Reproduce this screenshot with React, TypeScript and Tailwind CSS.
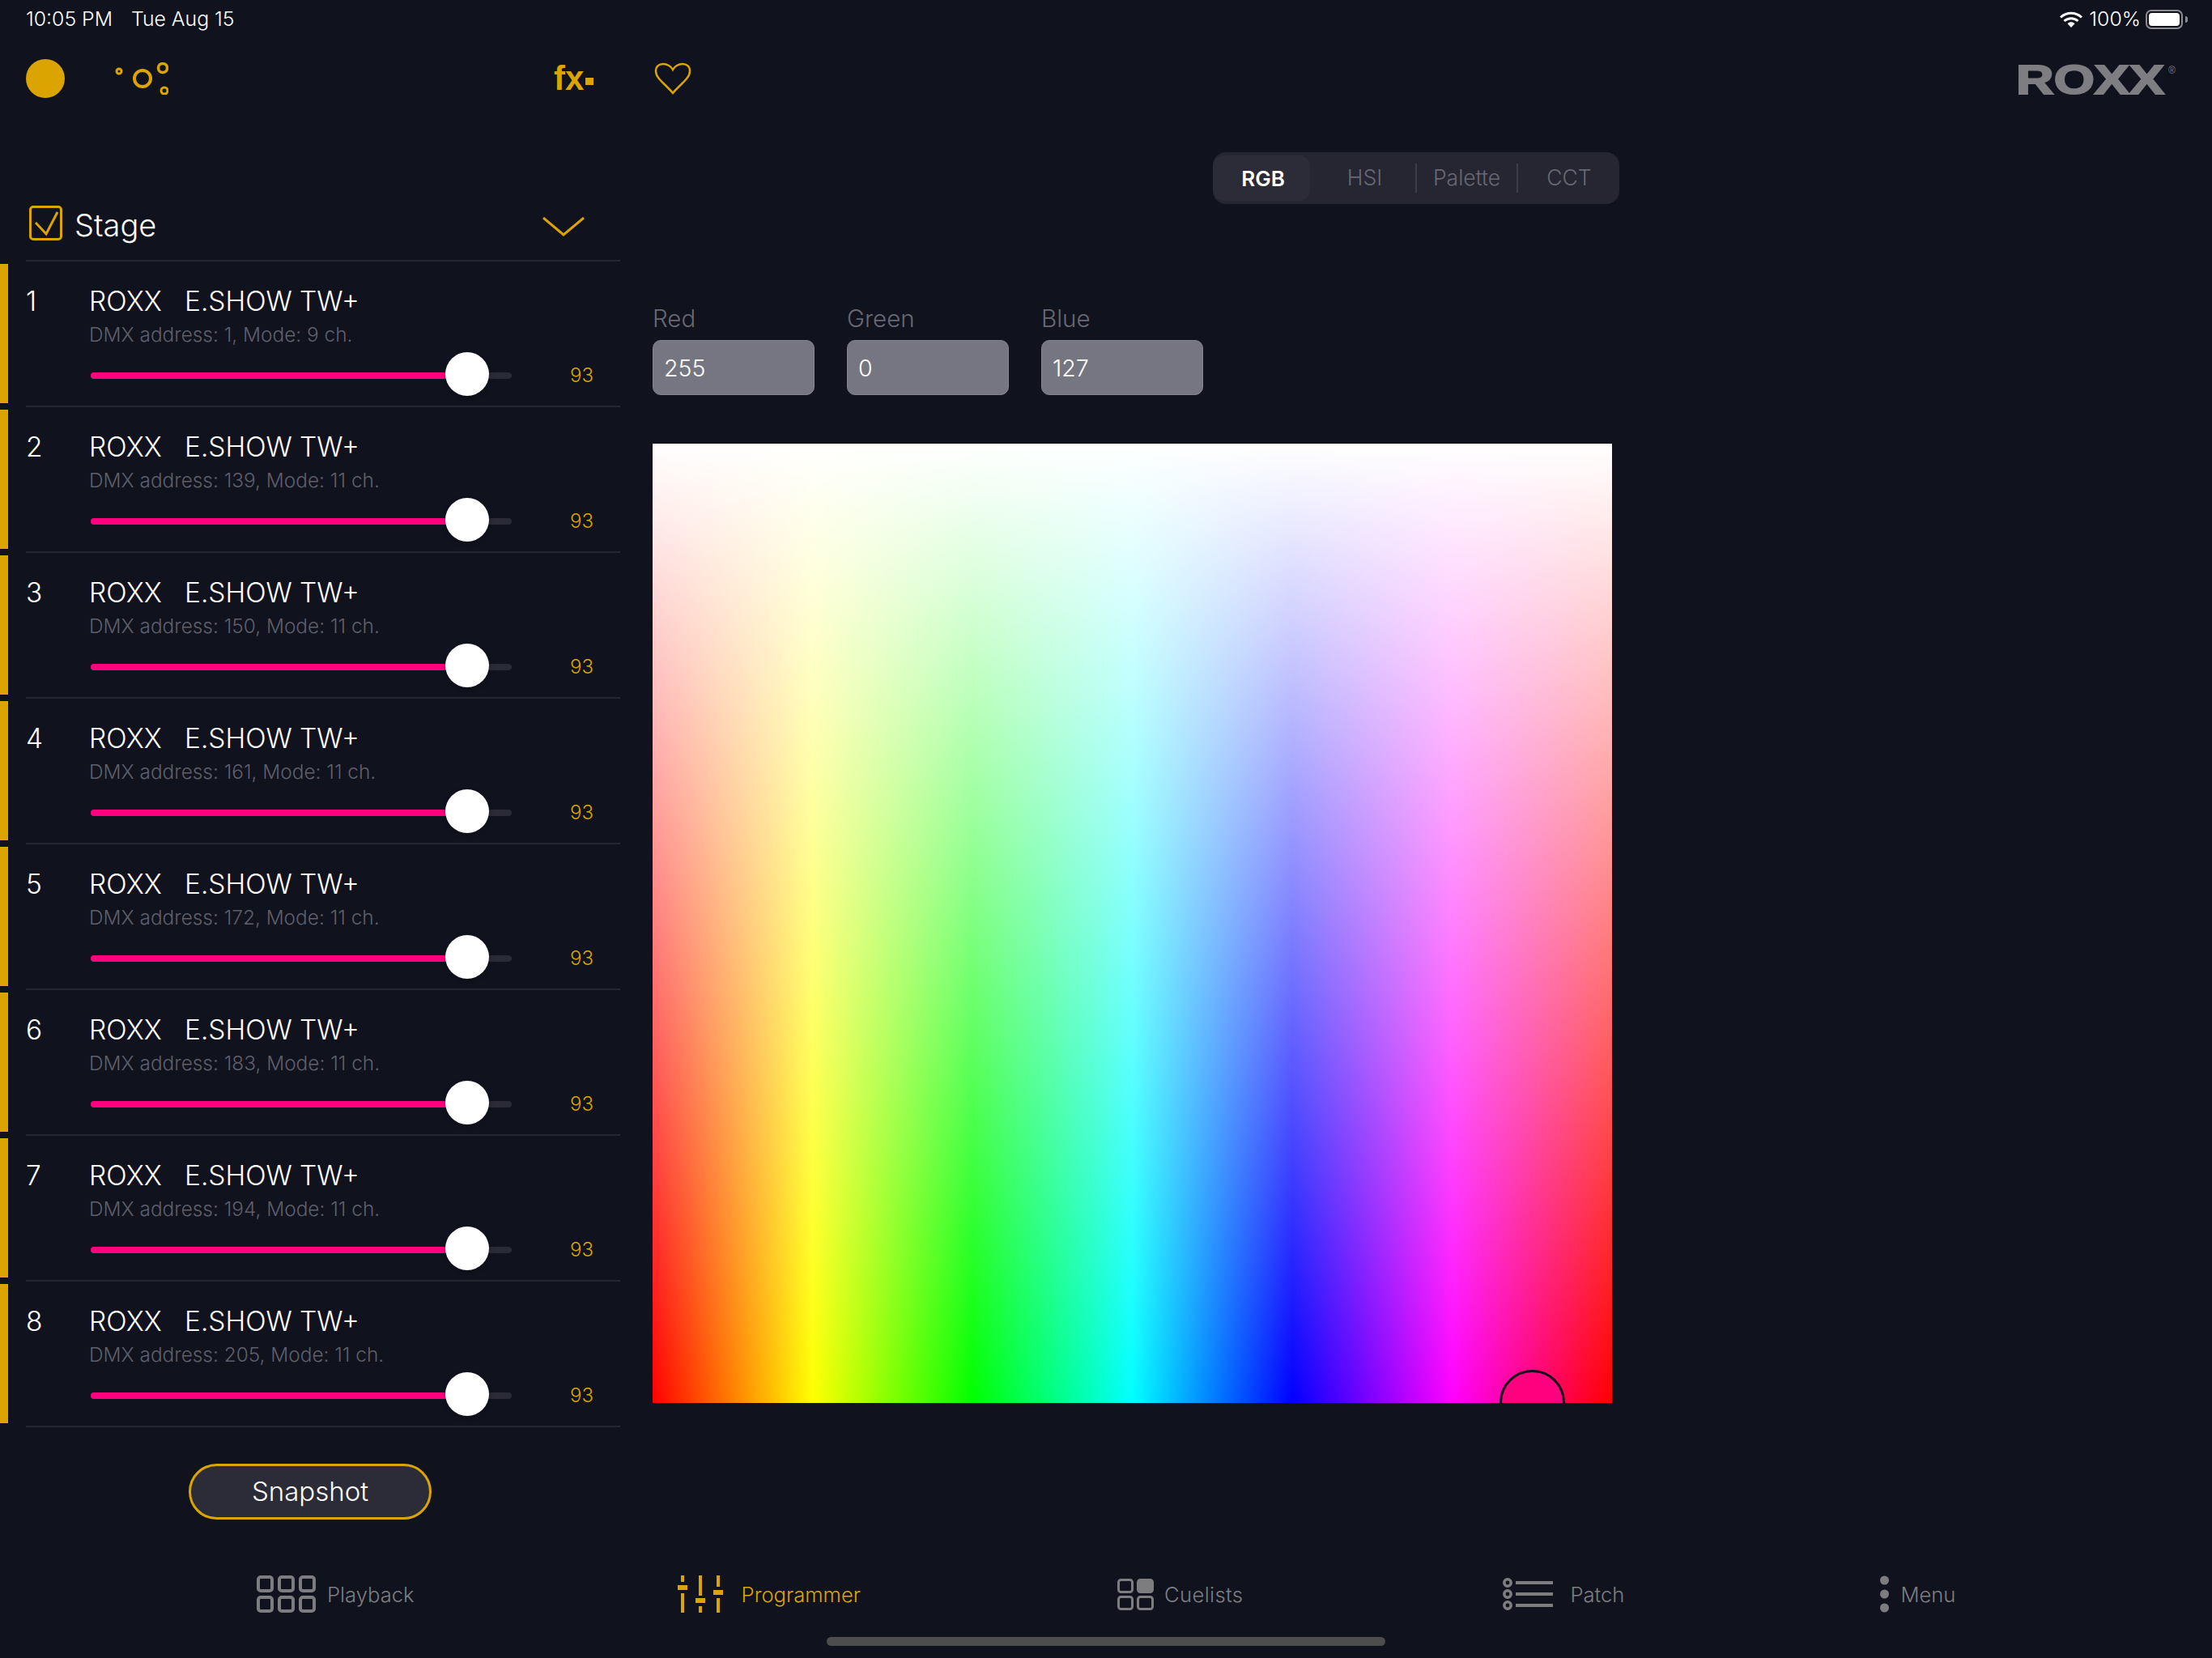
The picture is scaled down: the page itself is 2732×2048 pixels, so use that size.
import React from "react";

const GOLD = "#dba400";
const GREY = "#7d7d80";

const rows = [
  ["1", "DMX address: 1, Mode: 9 ch."],
  ["2", "DMX address: 139, Mode: 11 ch."],
  ["3", "DMX address: 150, Mode: 11 ch."],
  ["4", "DMX address: 161, Mode: 11 ch."],
  ["5", "DMX address: 172, Mode: 11 ch."],
  ["6", "DMX address: 183, Mode: 11 ch."],
  ["7", "DMX address: 194, Mode: 11 ch."],
  ["8", "DMX address: 205, Mode: 11 ch."],
];

function Row({ n, info }: { n: string; info: string }) {
  return (
    <div className="flex h-[180px]">
      <div className="mt-[3px] h-[172px] w-[10px] bg-[#dba400]" />
      <div className="ml-[22px] w-[734px] border-b-2 border-[#262733]">
        <div className="mt-[29px] flex h-[40px] items-center text-[33.4px] leading-[40px] text-white">
          <span className="w-[78px]">{n}</span>
          <span className="whitespace-pre">ROXX{"   "}E.SHOW TW+</span>
        </div>
        <div className="mt-[5px] ml-[78px] h-[32px] text-[24.4px] leading-[32px] text-[#5f5f6b]">{info}</div>
        <div className="mt-[8px] ml-[80px] flex h-[54px] items-center">
          <div className="relative h-[8px] w-[520px] rounded-full bg-[#2a2b36]">
            <div className="h-[8px] w-[460px] rounded-full bg-[#ff007f]" />
            <div className="absolute left-[438px] top-[-25px] h-[54px] w-[54px] rounded-full bg-white shadow-[0_2px_6px_rgba(0,0,0,0.3)]" />
          </div>
          <span className="ml-[72px] text-[24px] leading-[32px] text-[#dba400]">93</span>
        </div>
      </div>
    </div>
  );
}

function Field({ label, value }: { label: string; value: string }) {
  return (
    <div className="w-[200px]">
      <div className="h-[36px] text-[29.5px] leading-[36px] text-[#686873]">{label}</div>
      <div className="mt-[9px] flex h-[68px] items-center rounded-[10px] border border-[#85858f] bg-[#767682] pl-[13px] pt-[2px] text-[28.5px] text-white">
        {value}
      </div>
    </div>
  );
}

function Tab({ label, sep, className }: { label: string; sep?: boolean; className?: string }) {
  return (
    <div className={`relative flex h-[56px] w-[125px] items-center justify-center ${className ?? ""}`}>
      <span className="text-[26.5px] text-[#686873]">{label}</span>
      {sep && <div className="absolute left-0 top-[10px] h-[36px] w-[2px] bg-[#3d3e4a]" />}
    </div>
  );
}

function NavItem({ icon, label, active, className, textClass }: { icon: React.ReactNode; label: string; active?: boolean; className: string; textClass?: string }) {
  return (
    <div className={`flex h-[46px] items-center ${className}`}>
      {icon}
      <span className={`mt-[3px] text-[25.6px] ${active ? "text-[#dba400]" : "text-[#7d7d80]"} ${textClass ?? ""}`}>{label}</span>
    </div>
  );
}

export default function App() {
  return (
    <div className="flex h-[2048px] w-[2732px] flex-col overflow-hidden bg-[#10121e] font-['Inter','Noto_Sans',sans-serif] font-[350]">
      {/* status bar */}
      <div className="flex h-[48px] items-center justify-between pl-[32px] pr-[30px] text-[24.8px] text-white">
        <div className="flex gap-[23px]">
          <span>10:05 PM</span>
          <span>Tue Aug 15</span>
        </div>
        <div className="flex items-center">
          <svg width="28" height="20" viewBox="0 0 28 20">
            <path d="M1 7.5C8.5 .6 19.5 .6 27 7.5" fill="none" stroke="#fff" strokeWidth="3" />
            <path d="M5.5 12C10.5 7.5 17.5 7.5 22.5 12" fill="none" stroke="#fff" strokeWidth="3" />
            <path d="M9.5 15.2C12.5 12.7 15.5 12.7 18.5 15.2L14 20Z" fill="#fff" />
          </svg>
          <span className="ml-[8px]">100%</span>
          <div className="ml-[6px] h-[24px] w-[46px] rounded-[7px] border-2 border-[#8b8b90] p-[2px]">
            <div className="h-full w-full rounded-[4px] bg-white" />
          </div>
          <div className="ml-[3px] h-[8px] w-[3px] rounded-r-full bg-[#8b8b90]" />
        </div>
      </div>

      <div className="flex flex-1">
        {/* sidebar */}
        <div className="w-[766px]">
          <div className="mt-[25px] flex h-[48px] items-center pl-[32px]">
            <div className="h-[48px] w-[48px] rounded-full bg-[#dba400]" />
            <svg className="ml-[62px]" width="66" height="40" viewBox="0 0 66 40" fill="none" stroke={GOLD}>
              <circle cx="5" cy="11" r="3" strokeWidth="3" />
              <circle cx="34" cy="20" r="10" strokeWidth="4" />
              <circle cx="59" cy="7" r="5.5" strokeWidth="3.5" />
              <circle cx="61" cy="35" r="4" strokeWidth="3" />
            </svg>
            <div className="ml-[476px] flex h-[48px] items-center">
              <span className="font-['Liberation_Sans',sans-serif] text-[42px] font-bold leading-[42px] text-[#dba400]">fx</span>
              <div className="ml-[2px] mt-[6px] h-[9px] w-[10px] bg-[#dba400]" />
            </div>
          </div>
          <div className="ml-[32px] mt-[133px] flex h-[69px] w-[734px] items-start border-b-2 border-[#262733]">
            <div className="ml-[4px] flex h-[43px] w-[41px] items-center justify-center rounded-[5px] border-[3px] border-[#dba400]">
              <svg width="35" height="37" viewBox="0 0 35 37" fill="none" stroke={GOLD} strokeWidth="3">
                <path d="M5 18L18 32L32 5" />
              </svg>
            </div>
            <span className="ml-[15px] mt-[1px] text-[38px] leading-[46px] text-white">Stage</span>
            <svg className="ml-auto mr-[44px] mt-[14px]" width="52" height="24" viewBox="0 0 52 24" fill="none" stroke={GOLD} strokeWidth="3">
              <path d="M1 1L26 22L51 1" />
            </svg>
          </div>
          {rows.map((r) => (
            <Row key={r[0]} n={r[0]} info={r[1]} />
          ))}
          <div className="ml-[233px] mt-[45px] flex h-[69px] w-[300px] items-center justify-center rounded-full border-[3px] border-[#dba400] bg-[#2c2c38] text-[33px] text-white">
            Snapshot
          </div>
        </div>

        {/* main */}
        <div className="flex-1 pl-[40px]">
          <div className="mt-[29px] flex h-[40px] items-start">
            <svg className="ml-[2px]" width="46" height="40" viewBox="0 0 46 40" fill="none" stroke={GOLD} strokeWidth="2.5">
              <path d="M23 38C14 27 2 20 2 11C2 5 6 2 11 2C16 2 21 5 23 9C25 5 30 2 35 2C40 2 44 5 44 11C44 20 32 27 23 38Z" />
            </svg>
            <svg className="ml-[1635px] mt-[-10px]" width="202" height="62" viewBox="0 0 202 62">
              <text x="1" y="49" textLength="183" lengthAdjust="spacingAndGlyphs" fontFamily="Liberation Sans" fontWeight="700" fontSize="50" fill="#7e7e82" stroke="#7e7e82" strokeWidth="2">ROXX</text>
              <text x="189" y="24" fontFamily="Liberation Sans" fontSize="12" fill="#7e7e82">®</text>
            </svg>
          </div>
          <div className="ml-[692px] mt-[71px] flex h-[64px] w-[502px] items-center rounded-[16px] bg-[#252631]">
            <div className="flex h-[56px] w-[120px] items-center justify-center rounded-[14px] bg-[#2c2c38] pl-[4px]">
              <span className="text-[26px] font-semibold text-white">RGB</span>
            </div>
            <div className="ml-[5px] flex">
              <Tab label="HSI" />
              <Tab label="Palette" sep className="pl-[2px]" />
              <Tab label="CCT" sep className="pl-[5px]" />
            </div>
          </div>
          <div className="mt-[123px] flex gap-[40px]">
            <Field label="Red" value="255" />
            <Field label="Green" value="0" />
            <Field label="Blue" value="127" />
          </div>
          <div className="relative mt-[60px] h-[1185px] w-[1185px] overflow-hidden bg-[linear-gradient(to_bottom,#fff,rgba(255,255,255,0)),linear-gradient(to_right,#f00,#ff0,#0f0,#0ff,#00f,#f0f,#f00)]">
            <div className="absolute left-[1046px] top-[1144px] h-[81px] w-[81px] rounded-full border-[3px] border-[#14101a] bg-[#ff007f]" />
          </div>
        </div>
      </div>

      {/* bottom nav */}
      <div className="h-[148px] pt-[46px]">
        <div className="flex h-[46px]">
          <NavItem
            className="ml-[317px]"
            label="Playback"
            icon={
              <svg className="mr-[14px]" width="73" height="46" viewBox="0 0 73 46" fill="none" stroke={GREY} strokeWidth="4">
                <rect x="2" y="2" width="17" height="17" rx="3" />
                <rect x="28" y="2" width="17" height="17" rx="3" />
                <rect x="54" y="2" width="17" height="17" rx="3" />
                <rect x="2" y="27" width="17" height="17" rx="3" />
                <rect x="28" y="27" width="17" height="17" rx="3" />
                <rect x="54" y="27" width="17" height="17" rx="3" />
              </svg>
            }
          />
          <NavItem
            className="ml-[325px]"
            label="Programmer"
            active
            icon={
              <svg className="mr-[23px]" width="56" height="46" viewBox="0 0 56 46" fill={GOLD}>
                <rect x="4" y="0" width="4" height="8" />
                <rect x="0" y="12" width="12" height="6" />
                <rect x="4" y="22" width="4" height="24" />
                <rect x="26" y="0" width="4" height="25" />
                <rect x="22" y="28" width="12" height="6" />
                <rect x="26" y="38" width="4" height="8" />
                <rect x="48" y="0" width="4" height="14" />
                <rect x="44" y="18" width="12" height="6" />
                <rect x="48" y="28" width="4" height="18" />
              </svg>
            }
          />
          <NavItem
            className="ml-[317px]"
            label="Cuelists"
            textClass="tracking-[0.4px]"
            icon={
              <svg className="mr-[13px]" width="45" height="39" viewBox="0 0 45 39" fill="none" stroke={GREY} strokeWidth="3">
                <rect x="1.5" y="1.5" width="17" height="15" rx="3" />
                <rect x="25.5" y="1.5" width="18" height="15" rx="3" fill={GREY} />
                <rect x="1.5" y="22.5" width="17" height="15" rx="3" />
                <rect x="25.5" y="22.5" width="18" height="15" rx="3" />
              </svg>
            }
          />
          <NavItem
            className="ml-[321px]"
            label="Patch"
            icon={
              <svg className="mr-[21px]" width="62" height="40" viewBox="0 0 62 40" fill={GREY}>
                <circle cx="6" cy="6" r="4.2" fill="none" stroke={GREY} strokeWidth="3.5" />
                <circle cx="6" cy="20" r="4.2" fill="none" stroke={GREY} strokeWidth="3.5" />
                <circle cx="6" cy="34" r="4.2" fill="none" stroke={GREY} strokeWidth="3.5" />
                <rect x="16" y="4" width="46" height="4" />
                <rect x="16" y="18" width="46" height="4" />
                <rect x="16" y="32" width="46" height="4" />
              </svg>
            }
          />
          <NavItem
            className="ml-[316px]"
            label="Menu"
            icon={
              <svg className="mr-[14px]" width="11" height="46" viewBox="0 0 11 46" fill={GREY}>
                <circle cx="5.5" cy="6" r="5.5" />
                <circle cx="5.5" cy="23" r="5.5" />
                <circle cx="5.5" cy="40" r="5.5" />
              </svg>
            }
          />
        </div>
        <div className="ml-[1021px] mt-[30px] h-[11px] w-[690px] rounded-full bg-[#4d4d4d]" />
      </div>
    </div>
  );
}
